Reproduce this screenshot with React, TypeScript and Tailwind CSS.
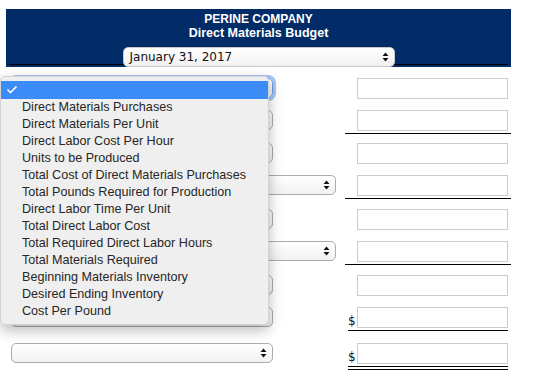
import { Check } from 'lucide-react';

const menuItems = [
    'Direct Materials Purchases',
    'Direct Materials Per Unit',
    'Direct Labor Cost Per Hour',
    'Units to be Produced',
    'Total Cost of Direct Materials Purchases',
    'Total Pounds Required for Production',
    'Direct Labor Time Per Unit',
    'Total Direct Labor Cost',
    'Total Required Direct Labor Hours',
    'Total Materials Required',
    'Beginning Materials Inventory',
    'Desired Ending Inventory',
    'Cost Per Pound',
];

type Row = {
    height: string;
    wide?: boolean;
    focused?: boolean;
    underline?: 'single' | 'double';
    dollar?: boolean;
};

const rows: Row[] = [
    { height: 'h-[32px]', focused: true },
    { height: 'h-[33px]', underline: 'single' },
    { height: 'h-[32px]' },
    { height: 'h-[34px]', wide: true, underline: 'single' },
    { height: 'h-[32px]' },
    { height: 'h-[34px]', wide: true, underline: 'single' },
    { height: 'h-[32px]' },
    { height: 'h-[36px]', dollar: true, underline: 'single' },
    { height: 'h-[30px]', dollar: true, underline: 'double' },
];

function Arrows() {
    return (
        <svg width="7" height="10" viewBox="0 0 7 10" className="shrink-0">
            <path d="M3.5 0.5 L6.5 4 L0.5 4 Z" fill="#111" />
            <path d="M3.5 9.5 L6.5 6 L0.5 6 Z" fill="#111" />
        </svg>
    );
}

function SelectBox({
    className,
    children,
}: {
    className: string;
    children?: React.ReactNode;
}) {
    return (
        <div
            className={`flex items-center justify-between rounded-[5px] border bg-gradient-to-b from-white to-[#f1f1f1] pr-[5px] ${className}`}
        >
            <span>{children}</span>
            <Arrows />
        </div>
    );
}

export default function App() {
    return (
        <div className="relative h-[384px] w-[533px] overflow-hidden bg-white font-['Liberation_Sans',Arial,sans-serif]">
            <div className="ml-[6px] mt-[9px] w-[505px] bg-[#012c68] pb-[2px] pt-[3px]">
                <div className="text-center text-[12px] font-bold leading-[14px] text-white">
                    <div>PERINE COMPANY</div>
                    <div className="text-[12.5px]">Direct Materials Budget</div>
                </div>
                <div className="mx-[3px] mt-[7px] flex h-[18px] justify-center border-b border-black">
                    <SelectBox className="relative z-10 h-[20px] w-[272px] shrink-0 border-[#c8c8c8] pl-[6px] font-['DejaVu_Sans',Verdana,sans-serif] text-[12px] text-[#111]">
                        January 31, 2017
                    </SelectBox>
                </div>
            </div>

            <div className="mt-[11px]">
                {rows.map((row, i) => (
                    <div key={i} className={`flex items-start ${row.height}`}>
                        <div className="w-[345px] shrink-0 pl-[11px]">
                            <SelectBox
                                className={`h-[20px] ${
                                    row.wide ? 'w-[325px]' : 'w-[262px]'
                                } ${
                                    row.focused
                                        ? 'border-[#6d9fe8] shadow-[0_0_0_3px_rgba(95,150,240,0.55)]'
                                        : 'border-[#acacac]'
                                }`}
                            />
                        </div>
                        <div className="w-[166px] shrink-0">
                            <div className="flex items-end">
                                <span
                                    className={`w-[12px] pl-[3px] font-['DejaVu_Sans',Verdana,sans-serif] text-[12px] leading-[14px] text-[#111] ${
                                        row.dollar ? '' : 'invisible'
                                    }`}
                                >
                                    $
                                </span>
                                <div className="h-[21px] w-[151px] border border-[#cccccc] bg-white" />
                            </div>
                            {row.underline && (
                                <div
                                    className={`mt-[2px] border-t border-black ${
                                        row.dollar
                                            ? 'ml-[3px] w-[160px]'
                                            : 'w-[166px]'
                                    }`}
                                />
                            )}
                            {row.underline === 'double' && (
                                <div className="ml-[3px] mt-[2px] w-[160px] border-t border-black" />
                            )}
                        </div>
                    </div>
                ))}
            </div>

            <div className="absolute left-0 top-[76px] w-[269px] rounded-[5px] border border-[#d4d4d4] bg-[#efefef] py-[4px] shadow-[0_5px_14px_rgba(0,0,0,0.28)]">
                <div className="flex h-[18px] items-center bg-[#3b8cf6] pl-[5px]">
                    <Check className="h-[12px] w-[12px] text-white" strokeWidth={3.5} />
                </div>
                {menuItems.map((item) => (
                    <div
                        key={item}
                        className="h-[17px] pl-[21px] text-[12.6px] leading-[16px] text-[#262626]"
                    >
                        {item}
                    </div>
                ))}
            </div>
        </div>
    );
}
